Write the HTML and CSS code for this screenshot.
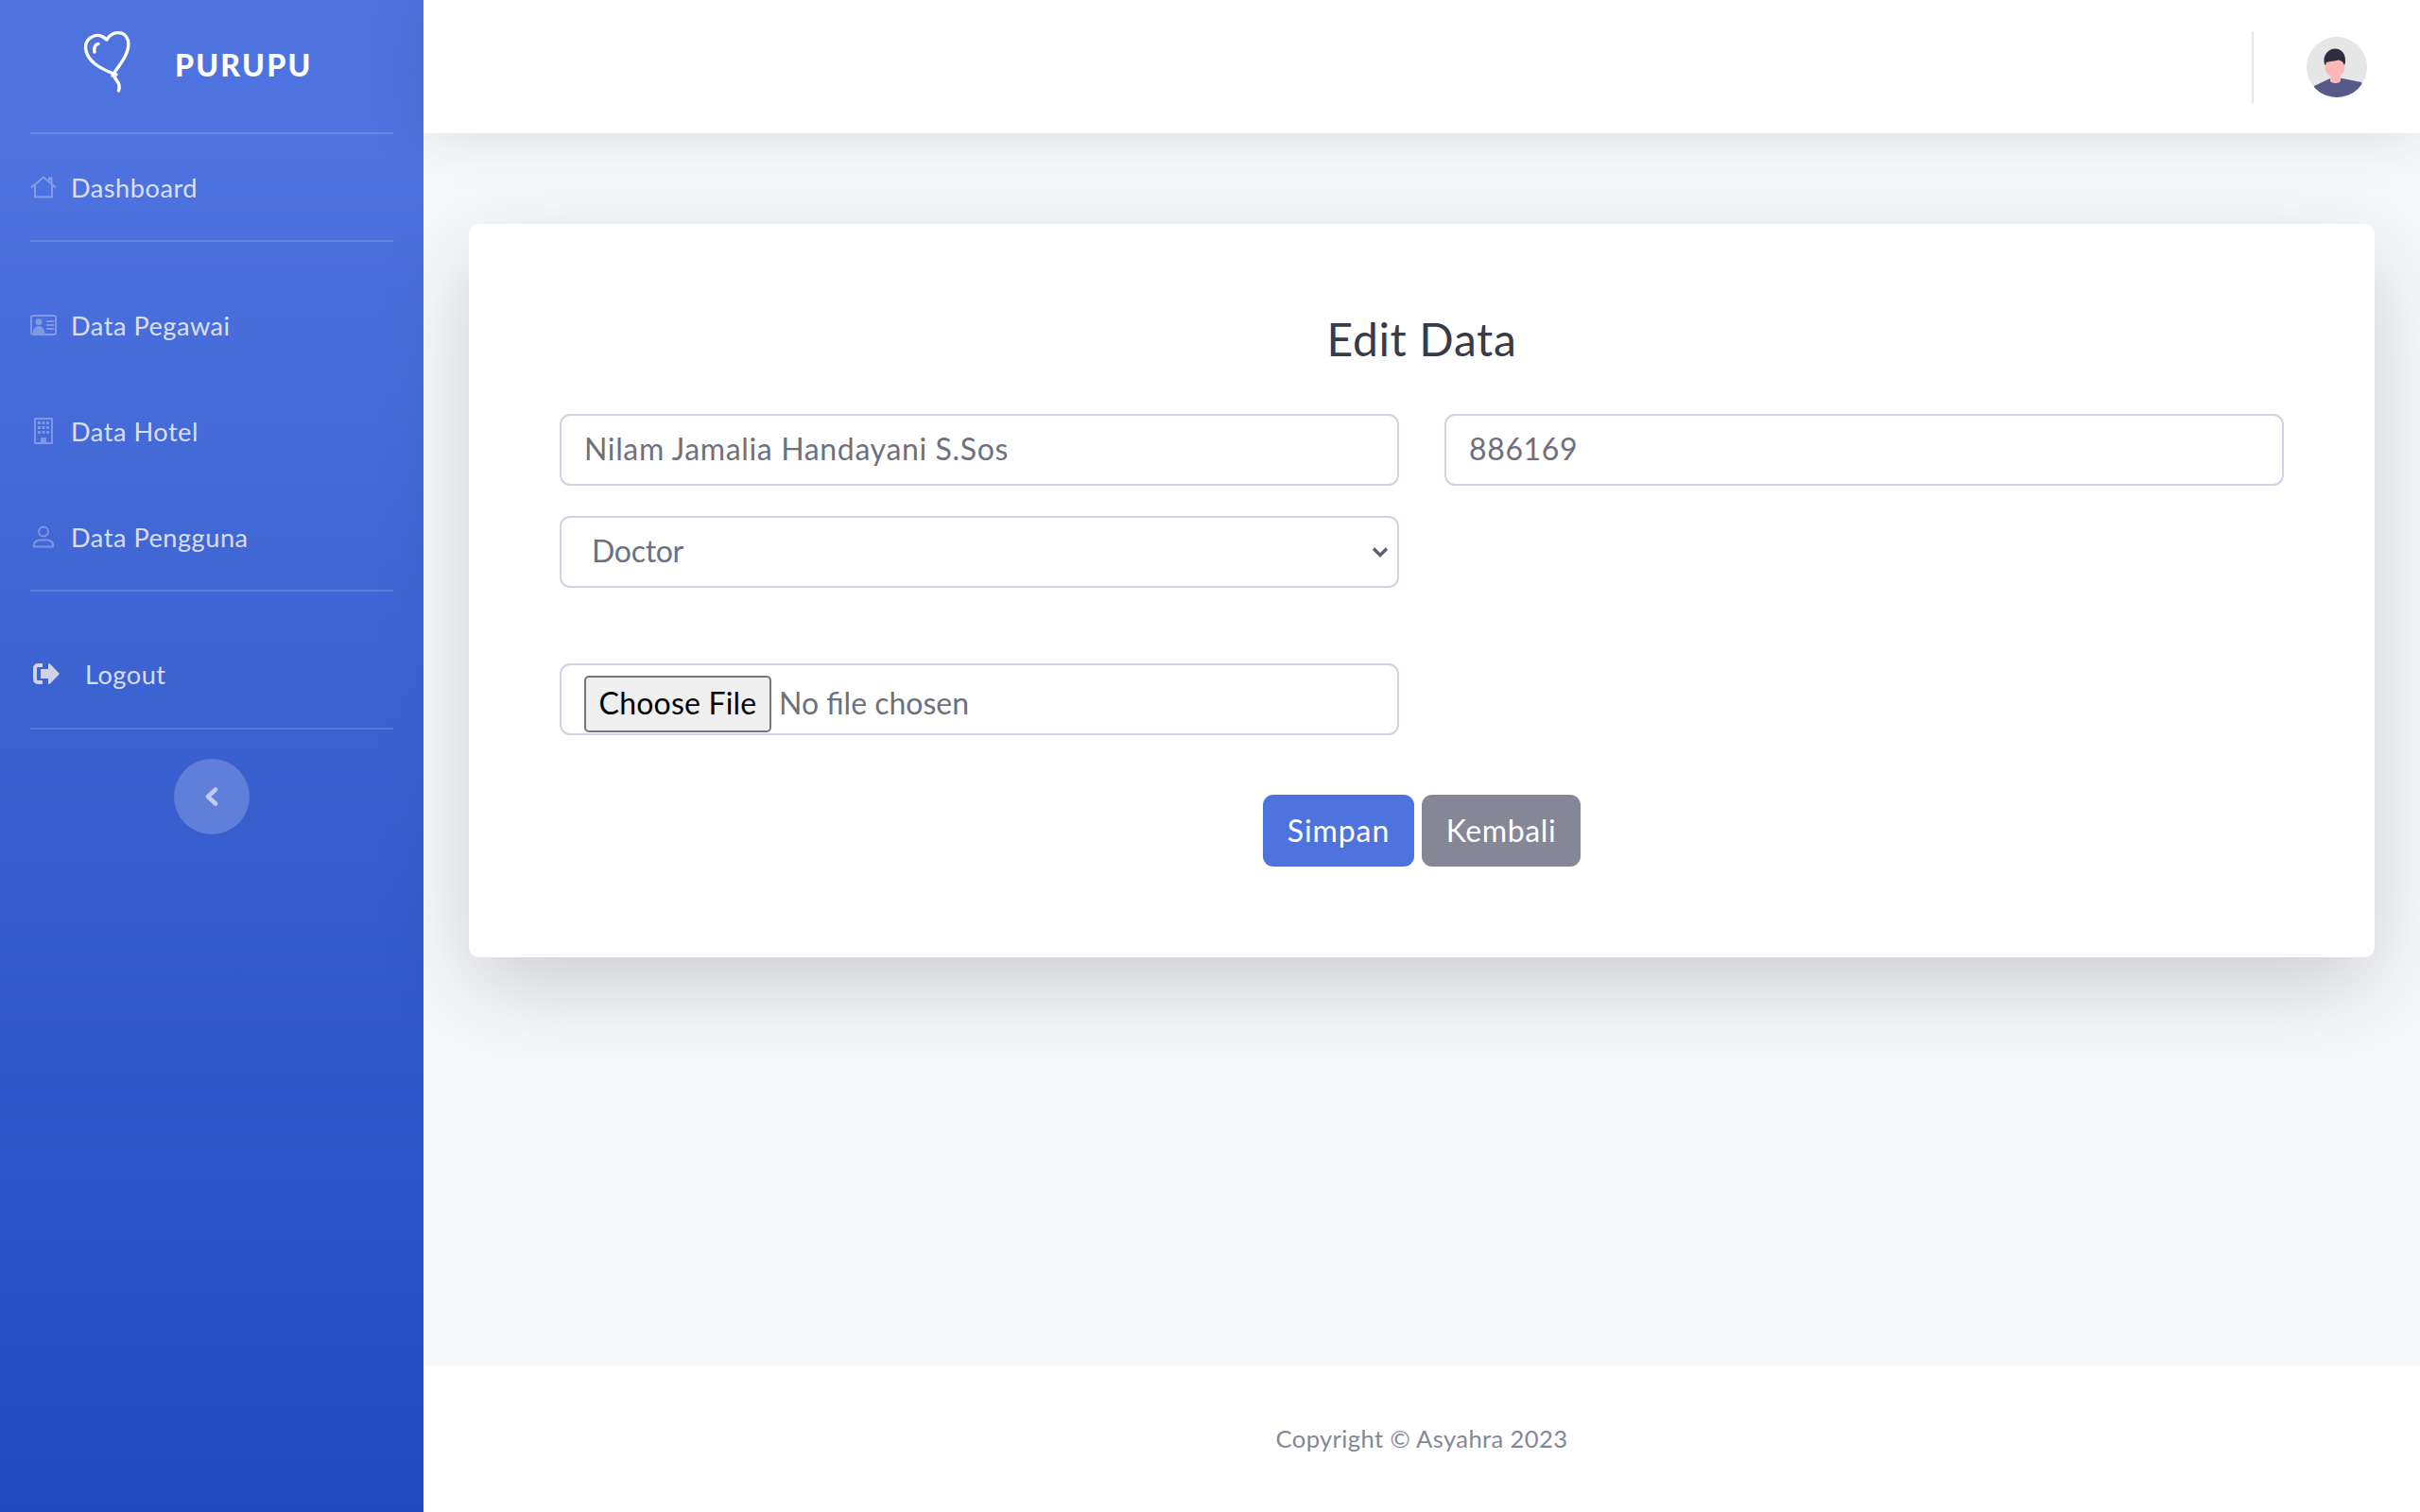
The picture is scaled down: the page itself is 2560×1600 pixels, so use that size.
FILE: index.html
```html
<!DOCTYPE html>
<html lang="id">
<head>
    <meta charset="UTF-8">
    <meta name="viewport" content="width=device-width, initial-scale=1.0">
    <title>Edit Data</title>
    <link rel="stylesheet" href="styles.css">
</head>
<body>

    <div class="wrapper">
        <aside class="sidebar">
            <a class="brand" href="#">
                <svg class="brand-icon" viewBox="85 30 55 70" fill="none" stroke="#fff" stroke-width="3.400" stroke-linecap="round" stroke-linejoin="round">
                    <path d="M120 79C108 74 92 67 90.500 52C90 42 100 36 108 39.500L113 43C118 34 132 32 135.500 44C138 56 128 68 120 79Z"/>
                    <path d="M104 47.500C100.500 48 99 52 100 56"/>
                    <path d="M119 81L123 80M121 82C123 87 128 89 125.500 97"/>
                </svg>
                <span class="brand-text">Purupu</span>
            </a>
            <hr class="divider">
            <a class="nav-link" href="#">
                <svg class="nav-icon" viewBox="0 0 28 24" fill="none" stroke="currentColor" stroke-width="2"><path d="M1 12.500L14 1.500L27 12.500M5 10V22.500H23V10M20 5V2.500H22.500V8"/></svg>
                <span>Dashboard</span>
            </a>
            <hr class="divider divider-space">
            <a class="nav-link" href="#">
                <svg class="nav-icon" viewBox="0 0 28 22" fill="currentColor"><path fill-rule="evenodd" d="M3 0H25A3 3 0 0 1 28 3V19A3 3 0 0 1 25 22H3A3 3 0 0 1 0 19V3A3 3 0 0 1 3 0ZM3 2A1 1 0 0 0 2 3V19A1 1 0 0 0 3 20H25A1 1 0 0 0 26 19V3A1 1 0 0 0 25 2Z"/><circle cx="9" cy="7.500" r="3.500"/><path d="M2.500 20C3 14 6 12 9 12C12 12 15 14 15.500 20ZM17 6H25V8H17ZM17 10H25V12H17ZM17 14H25V16H17Z"/></svg>
                <span>Data Pegawai</span>
            </a>
            <a class="nav-link" href="#">
                <svg class="nav-icon" viewBox="0 0 28 28" fill="currentColor"><path fill-rule="evenodd" d="M4 0H24V28H4ZM6 2V26H11V21H17V26H22V2Z"/><path d="M8 4H11V7H8ZM12.500 4H15.500V7H12.500ZM17 4H20V7H17ZM8 9H11V12H8ZM12.500 9H15.500V12H12.500ZM17 9H20V12H17ZM8 14H11V17H8ZM12.500 14H15.500V17H12.500ZM17 14H20V17H17Z"/></svg>
                <span>Data Hotel</span>
            </a>
            <a class="nav-link" href="#">
                <svg class="nav-icon" viewBox="0 0 28 24" fill="none" stroke="currentColor" stroke-width="2"><circle cx="14" cy="6.500" r="5"/><path d="M4 22.500C3 18 7 15.500 10 15.500H18C21 15.500 25 18 24 22.500Z"/></svg>
                <span>Data Pengguna</span>
            </a>
            <hr class="divider divider-space">
            <a class="nav-link nav-link-logout" href="#">
                <svg class="logout-icon" viewBox="0 0 28 22" fill="currentColor"><path d="M10 0V4H5A1 1 0 0 0 4 5V17A1 1 0 0 0 5 18H10V22H5A5 5 0 0 1 0 17V5A5 5 0 0 1 5 0Z"/><path d="M16 .500C16.500 0 17.500 0 18 .500L28 11L18 21.500C17.500 22 16 22 16 21V16H8V6H16Z"/></svg>
                <span>Logout</span>
            </a>
            <hr class="divider">
            <button class="toggle" type="button">
                <svg viewBox="0 0 14 20" fill="none" stroke="currentColor" stroke-width="4.500" stroke-linecap="round" stroke-linejoin="round"><path d="M11 2.500L3 10L11 17.500"/></svg>
            </button>
        </aside>

        <div class="main">
            <header class="topbar">
                <div class="topbar-line"></div>
                <svg class="avatar" viewBox="0 0 64 64">
                    <defs><clipPath id="avatarClip"><circle cx="32" cy="32" r="32"/></clipPath></defs>
                    <g clip-path="url(#avatarClip)">
                        <rect width="64" height="64" fill="#e6e6e6"/>
                        <path d="M8 52L25 44H38L58 48L62 64H4Z" fill="#575a89"/>
                        <path d="M25 36H36V46C36 50 25 50 25 46Z" fill="#ffb8b8"/>
                        <ellipse cx="30" cy="32" rx="10.500" ry="11" fill="#ffb8b8"/>
                        <path d="M18.500 26C18 18 24 12.500 30 12.500C37 12.500 41.500 18 41 26C41 28 40.500 29 40 30C39 27 37 25 34 24.500C30 25.500 25 26 21 27C20.500 28 20.500 29 20 30C19 29 18.500 28 18.500 26Z" fill="#2f2e41"/>
                    </g>
                </svg>
            </header>

            <main class="content">
                <section class="card">
                    <h3 class="card-title">Edit Data</h3>
                    <form class="form-grid">
                        <input class="form-control" type="text" value="Nilam Jamalia Handayani S.Sos">
                        <input class="form-control" type="text" value="886169">
                        <select class="form-control form-select">
                            <option>Doctor</option>
                        </select>
                        <input class="form-control form-file" type="file">
                        <div class="form-actions">
                            <button class="btn btn-primary" type="submit">Simpan</button>
                            <a class="btn btn-secondary" href="#">Kembali</a>
                        </div>
                    </form>
                </section>
            </main>

            <footer class="footer">
                <span>Copyright © Asyahra 2023</span>
            </footer>
        </div>
    </div>

</body>
</html>
```

FILE: styles.css
```css
* {
    box-sizing: border-box;
}
body {
    margin: 0;
    font-family: Lato, "Noto Sans", sans-serif;
    font-size: 32px;
    letter-spacing: 0.02em;
    color: #858796;
    background-color: #f8f9fc;
}
a {
    text-decoration: none;
}
.wrapper {
    display: flex;
    height: 100vh;
    overflow: hidden;
}

/* sidebar */
.sidebar {
    width: 448px;
    flex-shrink: 0;
    display: flex;
    flex-direction: column;
    background-image: linear-gradient(180deg, #4e73df 10%, #224abe 100%);
}
.brand {
    height: 140px;
    flex-shrink: 0;
    display: flex;
    align-items: center;
    padding-left: 85px;
    padding-bottom: 3px;
    color: white;
}
.brand-icon {
    width: 55px;
    height: 70px;
    margin-right: 45px;
    margin-bottom: 9px;
}
.brand-text {
    font-size: 32px;
    font-weight: 900;
    letter-spacing: 2.2px;
    text-transform: uppercase;
}
.divider {
    flex-shrink: 0;
    width: 384px;
    height: 2px;
    margin: 0 32px;
    border: none;
    background-color: rgba(255, 255, 255, 0.15);
}
.divider-space {
    margin-bottom: 32px;
}
.nav-link {
    height: 112px;
    flex-shrink: 0;
    display: flex;
    align-items: center;
    padding-left: 32px;
    font-size: 27.2px;
    letter-spacing: 0.5px;
    color: rgba(255, 255, 255, 0.8);
}
.nav-icon {
    width: 28px;
    height: 28px;
    margin-right: 15px;
    color: rgba(255, 255, 255, 0.3);
}
.nav-link-logout {
    padding-left: 35px;
    padding-bottom: 2px;
}
.logout-icon {
    width: 28px;
    height: 22px;
    margin-right: 27px;
    color: #d1d3e2;
}
.toggle {
    width: 80px;
    height: 80px;
    margin: 31px auto 0;
    padding: 0;
    display: flex;
    align-items: center;
    justify-content: center;
    border: none;
    border-radius: 50%;
    color: rgba(255, 255, 255, 0.6);
    background-color: rgba(255, 255, 255, 0.2);
}
.toggle svg {
    width: 14px;
    height: 20px;
}

/* topbar */
.main {
    flex: 1;
    min-width: 0;
    display: flex;
    flex-direction: column;
}
.topbar {
    height: 141px;
    flex-shrink: 0;
    display: flex;
    align-items: center;
    justify-content: flex-end;
    padding-right: 56px;
    background-color: white;
    box-shadow: 0 4.800px 56px rgba(58, 59, 69, 0.15);
}
.topbar-line {
    width: 2px;
    height: 76px;
    margin-right: 56px;
    background-color: #e3e6f0;
}
.avatar {
    width: 64px;
    height: 64px;
}

/* content */
.content {
    flex: 1;
    padding: 96px 48px 0;
}
.card {
    padding: 96px;
    border-radius: 11px;
    background-color: white;
    box-shadow: 0 32px 96px rgba(0, 0, 0, 0.175);
}
.card-title {
    margin: -10px 0 43px;
    font-size: 48px;
    font-weight: 400;
    line-height: 1.5;
    text-align: center;
    color: #3a3b45;
}
.form-grid {
    display: grid;
    grid-template-columns: 888px 888px;
    column-gap: 48px;
    row-gap: 32px;
}
.form-control {
    width: 100%;
    height: 76px;
    padding: 10px 24px 14px;
    font-family: inherit;
    font-size: 32px;
    letter-spacing: inherit;
    color: #6e707e;
    background-color: white;
    border: 2px solid #d1d3e2;
    border-radius: 11px;
}
.form-select {
    grid-column: 1;
    padding-left: 32px;
    letter-spacing: -0.3px;
    appearance: none;
    background-image: url("data:image/svg+xml,%3Csvg xmlns='http://www.w3.org/2000/svg' viewBox='0 0 18 12'%3E%3Cpath d='M2 2.500L9 9.500L16 2.500' fill='none' stroke='%235f606e' stroke-width='3.400'/%3E%3C/svg%3E");
    background-repeat: no-repeat;
    background-position: right 9px center;
    background-size: 18px 12px;
}
.form-file {
    grid-column: 1;
    margin-top: 48px;
    padding-top: 11px;
    padding-bottom: 2px;
    letter-spacing: 0;
}
.form-file::file-selector-button {
    width: 198px;
    height: 60px;
    margin-right: 8px;
    padding: 0 0 3px;
    font-family: inherit;
    font-size: 32px;
    letter-spacing: 0.2px;
    color: black;
    background-color: #efefef;
    border: 2px solid #767676;
    border-radius: 5px;
}
.form-actions {
    grid-column: 1 / 3;
    display: flex;
    justify-content: center;
    gap: 8px;
    margin-top: 31px;
}
.btn {
    height: 76px;
    display: flex;
    align-items: center;
    justify-content: center;
    padding: 0 24px 2px;
    font-family: inherit;
    font-size: 32px;
    letter-spacing: inherit;
    color: white;
    border: none;
    border-radius: 11px;
    cursor: pointer;
}
.btn-primary {
    width: 160px;
    letter-spacing: 0.9px;
    background-color: #4e73df;
}
.btn-secondary {
    width: 168px;
    background-color: #858796;
}

/* footer */
.footer {
    height: 154px;
    flex-shrink: 0;
    display: flex;
    align-items: center;
    justify-content: center;
    padding-bottom: 2px;
    font-size: 25.6px;
    letter-spacing: 0.37px;
    background-color: white;
}
```
